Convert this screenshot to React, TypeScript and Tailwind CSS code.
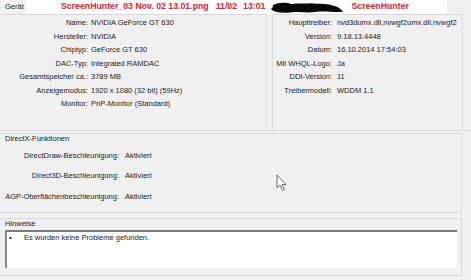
import React from "react";

const leftRows = [
  ["Name:", "NVIDIA GeForce GT 630"],
  ["Hersteller:", "NVIDIA"],
  ["Chiptyp:", "GeForce GT 630"],
  ["DAC-Typ:", "Integrated RAMDAC"],
  ["Gesamtspeicher ca.:", "3789 MB"],
  ["Anzeigemodus:", "1920 x 1080 (32 bit) (59Hz)"],
  ["Monitor:", "PnP-Monitor (Standard)"],
];

const rightRows = [
  ["Haupttreiber:", "nvd3dumx.dll,nvwgf2umx.dll,nvwgf2"],
  ["Version:", "9.18.13.4448"],
  ["Datum:", "16.10.2014 17:54:03"],
  ["Mit WHQL-Logo:", "Ja"],
  ["DDI-Version:", "11"],
  ["Treibermodell:", "WDDM 1.1"],
];

const dxRows = [
  ["DirectDraw-Beschleunigung:", "Aktiviert"],
  ["Direct3D-Beschleunigung:", "Aktiviert"],
  ["AGP-Oberflächenbeschleunigung:", "Aktiviert"],
];

type Rows = { rows: string[][]; labelW: string; gap: string };

const InfoRows = ({ rows, labelW, gap }: Rows) => (
  <div className="flex flex-col">
    {rows.map(([label, value]) => (
      <div key={label} className="flex h-[13.5px] items-center whitespace-nowrap">
        <span className={`${labelW} shrink-0 text-right`}>{label}</span>
        <span className={`${gap} overflow-hidden`}>{value}</span>
      </div>
    ))}
  </div>
);

const Cursor = () => (
  <svg
    className="absolute left-[276px] top-[174px]"
    width="12"
    height="18"
    viewBox="0 0 12 18"
  >
    <path
      d="M1 1 L1 14 L4 11 L6.5 16.5 L8.5 15.5 L6 10.5 L10 10.5 Z"
      fill="#ffffff"
      stroke="#6b6b6b"
      strokeWidth="1"
      strokeLinejoin="round"
    />
  </svg>
);

export default function App() {
  return (
    <div
      className="relative flex h-[280px] w-[471px] flex-col overflow-hidden bg-[#f0f0f0] text-[7.5px] text-[#222222]"
      style={{ fontFamily: '"Liberation Sans", Arial, sans-serif' }}
    >
      {/* title strip */}
      <div className="flex h-[14px] items-center">
        <span className="w-[26px] shrink-0 pl-[5px]">Gerät</span>
        <div className="flex h-[14px] w-[421px] items-center bg-white pl-[35px] text-[8.75px] font-bold whitespace-nowrap text-[#e4202b]">
          <span>ScreenHunter_03 Nov. 02 13.01.png</span>
          <span className="ml-[7px]">11/02</span>
          <span className="ml-[6px]">13:01</span>
          <svg width="76" height="13" viewBox="0 0 80 13" className="ml-[3px] shrink-0">
            <path
              d="M2 8 C8 2 14 3 20 4 C28 1 36 3 44 2 C52 3 60 2 66 4 C72 5 76 8 78 11 C70 12 60 10 50 11 C40 13 30 10 20 12 C12 12 6 12 2 8 Z"
              fill="#0a0a0a"
            />
            <path d="M4 4 C10 1 18 1 24 3 L22 6 C16 5 10 6 4 7 Z" fill="#0a0a0a" />
          </svg>
          <span className="ml-[7px]">ScreenHunter</span>
        </div>
      </div>

      {/* device / driver panels */}
      <div className="flex h-[117px] shrink-0 border-b border-[#dadada]">
        <div className="w-[267px] shrink-0 border-t border-r border-[#dadada] pt-[1px]">
          <InfoRows rows={leftRows} labelW="w-[88px]" gap="pl-[3px]" />
        </div>
        <div className="ml-[5px] w-[191px] shrink-0 overflow-hidden border-t border-l border-r border-[#dadada] pt-[1px]">
          <InfoRows rows={rightRows} labelW="w-[59px]" gap="pl-[5px]" />
        </div>
      </div>

      {/* DirectX */}
      <div className="mt-[2px] flex h-[80px] w-[462px] shrink-0 flex-col border-t border-r border-b border-[#dadada]">
        <div className="flex h-[10px] items-end pl-[5px]">DirectX-Funktionen</div>
        <div className="mt-[5px] flex flex-col gap-[7.5px]">
          {dxRows.map(([label, value]) => (
            <div key={label} className="flex h-[13px] items-center whitespace-nowrap">
              <span className="w-[119px] shrink-0 text-right">{label}</span>
              <span className="pl-[6px]">{value}</span>
            </div>
          ))}
        </div>
      </div>

      {/* Hinweise */}
      <div className="mt-[5px] flex h-[58px] w-[462px] shrink-0 flex-col border-t border-r border-b border-[#dadada] pl-[5px]">
        <div className="flex h-[10px] items-end">Hinweise</div>
        <div className="mt-[1px] flex h-[38px] w-[452px] items-start border-t-2 border-l-2 border-t-[#7a7a7a] border-l-[#8a8a8a] bg-white">
          <span className="w-[17px] pl-[2px] text-[8px]">•</span>
          <span>Es wurden keine Probleme gefunden.</span>
        </div>
      </div>

      <Cursor />
    </div>
  );
}
